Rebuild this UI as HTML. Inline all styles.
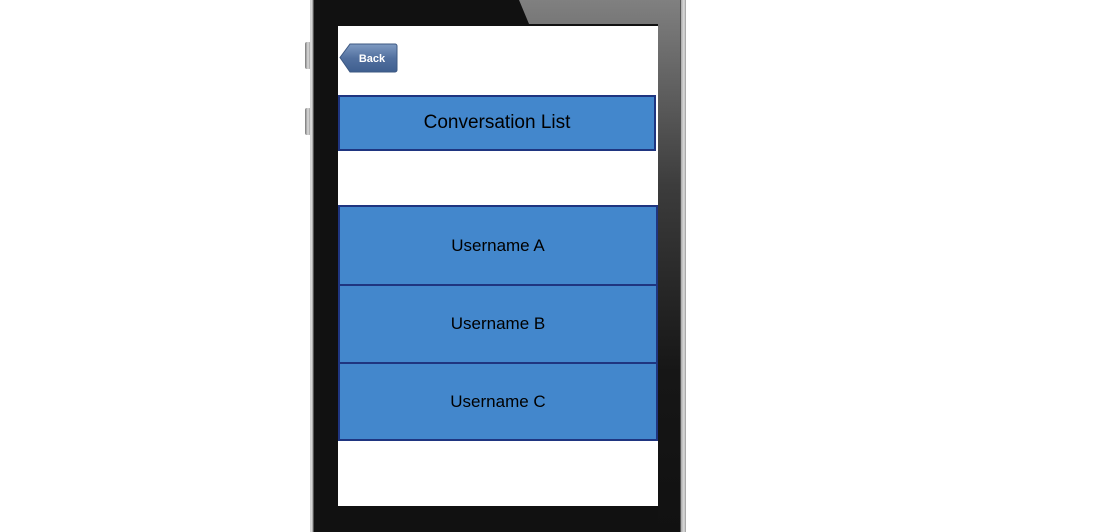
<!DOCTYPE html>
<html><head><style>
body{margin:0;width:1106px;height:532px;background:#fff;position:relative;overflow:hidden;font-family:"Liberation Sans",sans-serif}
.a{position:absolute}
.row{position:absolute;box-sizing:border-box;left:338px;width:320px;background:#4387cc;border:2px solid #1f3580;display:flex;align-items:center;justify-content:center;color:#000;font-size:17px}
</style></head><body>
<div class="a" style="left:305px;top:42px;width:6px;height:27px;background:linear-gradient(90deg,#777,#ddd,#888);border-radius:2px"></div>
<div class="a" style="left:305px;top:108px;width:6px;height:27px;background:linear-gradient(90deg,#777,#ddd,#888);border-radius:2px"></div>
<div class="a" style="left:310px;top:0;width:376px;height:532px;background:linear-gradient(90deg,#bbb,#eee 1px,#999 3px,#111 4px,#111 368px,#000 370px,#aaa 371px,#ddd 374px,#999 376px)"></div>
<svg class="a" style="left:314px;top:0" width="366" height="532">
<defs><linearGradient id="g" x1="0" y1="0" x2="0" y2="1"><stop offset="0" stop-color="#808080"/><stop offset="0.35" stop-color="#3c3c3c"/><stop offset="0.7" stop-color="#161616"/><stop offset="1" stop-color="#111"/></linearGradient></defs>
<polygon points="0,0 205,0 215,24 366,24 366,0" fill="#000"/>
<polygon points="205,0 366,0 366,532 344,532 344,24 215,24" fill="url(#g)"/>
</svg>
<div class="a" style="left:338px;top:26px;width:320px;height:480px;background:#fff"></div>
<svg class="a" style="left:339px;top:43px" width="60" height="30">
<defs><linearGradient id="b" x1="0" y1="0" x2="0" y2="1"><stop offset="0" stop-color="#7f9bc2"/><stop offset="0.5" stop-color="#52709f"/><stop offset="1" stop-color="#3f5f8f"/></linearGradient></defs>
<path d="M1,14.5 L11,1 H56 a2,2 0 0 1 2,2 V27 a2,2 0 0 1 -2,2 H11 Z" fill="url(#b)" stroke="#3d5882"/>
<text x="33" y="19" text-anchor="middle" font-family="Liberation Sans" font-weight="bold" font-size="11" fill="#fff">Back</text>
</svg>
<div class="row" style="top:95px;height:56px;font-size:19px;width:318px">Conversation List</div>
<div class="row" style="top:205px;height:81px">Username A</div>
<div class="row" style="top:284px;height:80px">Username B</div>
<div class="row" style="top:362px;height:79px">Username C</div>
</body></html>
